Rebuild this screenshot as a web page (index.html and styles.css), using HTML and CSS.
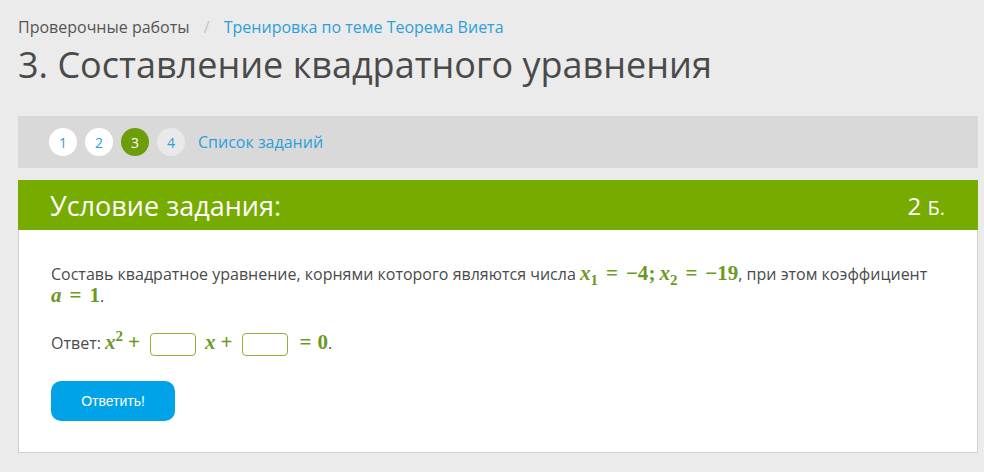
FILE: index.html
```html
<!DOCTYPE html>
<html lang="ru">

<head>
    <meta charset="UTF-8">
    <title>3. Составление квадратного уравнения</title>
    <link rel="stylesheet" href="styles.css">
</head>

<body>
    <div id="page">
        <div class="breadcrumb">
            <span class="crumb">Проверочные работы</span>
            <span class="sep">/</span>
            <a class="crumb-link">Тренировка по теме Теорема Виета</a>
        </div>
        <h1>3. Составление квадратного уравнения</h1>

        <div class="steps">
            <span class="step">1</span>
            <span class="step">2</span>
            <span class="step active">3</span>
            <span class="step grey">4</span>
            <a class="steps-list">Список заданий</a>
        </div>

        <div class="task">
            <div class="task-head">
                <span class="task-title">Условие задания:</span>
                <span class="task-points">2 <small>Б.</small></span>
            </div>
            <div class="task-body">
                <p class="cond">Составь квадратное уравнение, корнями которого являются числа
                    <span class="m"><i>x</i><sub>1</sub><span class="mo">=</span>−4<span class="semi">;</span><i>x</i><sub>2</sub><span class="mo">=</span>−19</span>, при этом коэффициент
                    <span class="m"><i>a</i><span class="mo">=</span>1</span>.</p>
                <p class="answer">Ответ: <span class="m"><i>x</i><sup>2</sup><span class="mo">+</span></span><input type="text" class="box"><span class="m"><i>x</i><span class="mo">+</span></span><input type="text" class="box"><span class="m"><span class="mo last">=</span>0</span>.</p>
                <button class="send">Ответить!</button>
            </div>
        </div>
    </div>
</body>

</html>
```

FILE: styles.css
```css
body {
    font-family: "Open Sans", Arial, sans-serif;
    background-color: #ebebeb;
    margin: 0;
    padding: 0;
    color: #4a4a4a;
}

#page {
    padding: 16px 6px 0 18px;
}

.breadcrumb {
    font-size: 16px;
    line-height: 22px;
    color: #555;
}

.sep {
    color: #c4c4c4;
    margin: 0 10px;
}

.crumb-link {
    color: #2d9fd9;
}

h1 {
    font-size: 36px;
    font-weight: 400;
    line-height: 46px;
    margin: 4px 0 28px 0;
    color: #4a4a4a;
}

.steps {
    display: flex;
    align-items: center;
    gap: 8px;
    height: 52px;
    padding-left: 31px;
    background-color: #d9d9d9;
}

.step {
    width: 28px;
    height: 28px;
    border-radius: 50%;
    background-color: #fff;
    color: #2d9fd9;
    font-size: 14px;
    display: flex;
    align-items: center;
    justify-content: center;
}

.step.active {
    background-color: #6e9d0b;
    color: #fff;
}

.step.grey {
    background-color: #e9e9e9;
}

.steps-list {
    color: #2d9fd9;
    font-size: 16px;
    margin-left: 5px;
}

.task {
    margin-top: 12px;
    background-color: #fff;
    border: 1px solid #cfcfcf;
    border-top: none;
}

.task-head {
    display: flex;
    justify-content: space-between;
    align-items: center;
    height: 50px;
    padding: 0 33px 0 32px;
    margin: 0 -1px;
    background-color: #76ab00;
    color: #fff;
}

.task-title {
    font-size: 27px;
}

.task-points {
    font-size: 24px;
}

.task-points small {
    font-size: 20px;
}

.task-body {
    padding: 33px 32px 31px 32px;
    font-size: 16px;
    line-height: 22px;
}

.cond {
    margin: 0 0 20px 0;
}

.m {
    font-family: "Liberation Serif", "DejaVu Serif", serif;
    font-size: 21px;
    font-weight: 700;
    line-height: 0;
    color: #6a9a1f;
}

.m sub,
.m sup {
    font-size: 15px;
    line-height: 0;
}

.mo {
    margin: 0 8px;
}

.semi {
    margin-right: 4px;
}

.answer {
    margin: 0 0 22px 0;
    line-height: 32px;
}

.answer .mo {
    margin: 0 6px 0 5px;
}

.answer .mo.last {
    margin-left: 2px;
}

.box {
    width: 44px;
    height: 21px;
    padding: 0;
    border: 1px solid #8fb33a;
    border-radius: 4px;
    vertical-align: middle;
    margin: 0 9px 0 4px;
}

.send {
    width: 124px;
    height: 40px;
    background-color: #00a3e8;
    color: #fff;
    border: none;
    border-radius: 10px;
    font-family: "Liberation Sans", Arial, sans-serif;
    font-size: 14px;
}
```
